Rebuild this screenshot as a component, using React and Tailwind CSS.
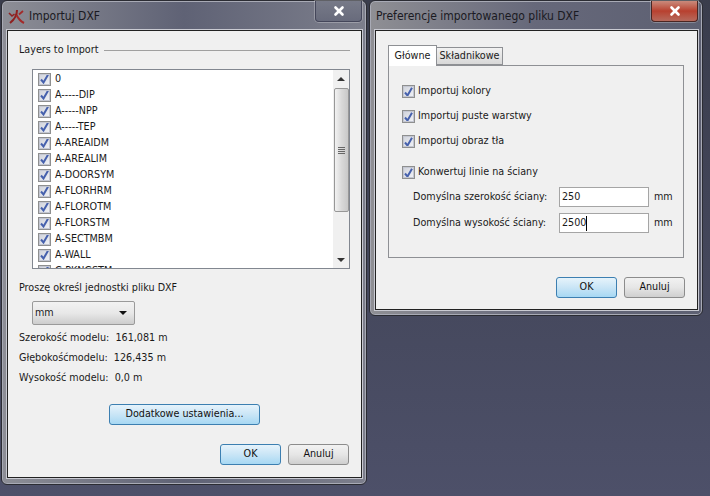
import React from "react";
import { X } from "lucide-react";

const layers = [
  "0",
  "A-----DIP",
  "A-----NPP",
  "A-----TEP",
  "A-AREAIDM",
  "A-AREALIM",
  "A-DOORSYM",
  "A-FLORHRM",
  "A-FLOROTM",
  "A-FLORSTM",
  "A-SECTMBM",
  "A-WALL",
  "C-PKNGSTM",
];

const CheckBox = ({ checked = true }) => (
  <span className="flex items-center justify-center w-[13px] h-[13px] shrink-0 border border-[#8e8f8f] bg-gradient-to-br from-[#cfd2da] to-[#f2f3f7] outline outline-1 -outline-offset-2 outline-[#c4c7d2]">
    {checked && (
      <svg width="9" height="10" viewBox="0 0 9 10">
        <path d="M1 5.5 L3.5 8.5 L8 0.8" stroke="#4661ad" strokeWidth="2" fill="none" />
      </svg>
    )}
  </span>
);

const Button = ({ children, primary, className }) => (
  <button
    className={
      "flex items-center justify-center h-[21px] rounded-[3px] border text-[#111] " +
      (primary
        ? "border-[#3c7fb1] bg-gradient-to-b from-[#e6f3fb] via-[#c9e5f6] to-[#a7d8f3] "
        : "border-[#8c8c8c] bg-gradient-to-b from-[#f2f2f2] via-[#e6e6e6] to-[#cfcfcf] ") +
      className
    }
  >
    {children}
  </button>
);

const CloseButton = ({ active }) => (
  <div
    className={
      "flex items-center justify-center w-[47px] h-[21px] rounded-b-[4px] border border-t-0 shadow-[0_0_0_1px_rgba(255,255,255,0.25)] " +
      (active
        ? "border-[#4a2522] bg-gradient-to-b from-[#c98a7c] via-[#b8402f] to-[#b5695c]"
        : "border-[#44465a] bg-gradient-to-b from-[#777a88] to-[#686b7c]")
    }
  >
    <X size={14} strokeWidth={4.5} className="text-white" />
  </div>
);

const Logo = () => (
  <svg width="17" height="15" viewBox="0 0 17 15" className="shrink-0">
    <path d="M1 4 L4 7 L6.5 5" stroke="#8f2020" strokeWidth="1.6" fill="none" />
    <path d="M9 1 C9 6 7 10 2 14" stroke="#8f2020" strokeWidth="2" fill="none" />
    <path d="M8.5 6 C10 9 12 12 16 14" stroke="#a32a2a" strokeWidth="2" fill="none" />
    <path d="M15 2 L11 5.5" stroke="#a32a2a" strokeWidth="1.8" fill="none" />
  </svg>
);

const LayersWindow = () => (
  <div className="flex flex-col w-[366px] h-[485px] pl-[5px] pr-[4px] pb-[6px] rounded-[6px] border border-[#2b2c33] shadow-[inset_0_0_0_1px_#a8aab5] bg-gradient-to-r from-[#8d8e96] via-[#5f6275] to-[#7d7f8c]">
    <div className="flex items-start justify-between h-[29px] shrink-0">
      <div className="flex items-center gap-[4px] h-[29px] pl-[1px] pt-[1px] text-[12px] text-[#1a1a22]">
        <Logo />
        <span>Importuj DXF</span>
      </div>
      <CloseButton />
    </div>
    <div className="flex flex-col flex-1 min-h-0 border border-[#222] shadow-[0_0_0_1px_#c9cad2] bg-[#f0f0f0] pl-[11px] pr-[11px]">
      <div className="flex items-center gap-[6px] h-[14px] mt-[12px] shrink-0">
        <span>Layers to Import</span>
        <div className="flex-1 h-px bg-[#a0a0a0]" />
      </div>
      <div className="flex ml-[13px] h-[200px] mt-[12px] shrink-0 border border-[#828790] bg-white">
        <div className="flex-1 overflow-hidden pt-px">
          {layers.map((name) => (
            <div key={name} className="flex items-center gap-[4px] h-[16px] pl-[5px]">
              <CheckBox />
              <span>{name}</span>
            </div>
          ))}
        </div>
        <div className="flex flex-col items-center w-[16px] bg-[#f0f0f0]">
          <div className="flex items-center justify-center h-[18px] shrink-0">
            <div className="w-0 h-0 border-x-[4px] border-x-transparent border-b-[4px] border-b-[#333]" />
          </div>
          <div className="flex items-center justify-center w-[15px] h-[124px] shrink-0 rounded-[2px] border border-[#979797] bg-gradient-to-r from-[#f2f2f2] via-[#d9d9d9] to-[#c8c8c8]">
            <div className="flex flex-col gap-px">
              <div className="w-[7px] h-px bg-[#666]" />
              <div className="w-[7px] h-px bg-[#666]" />
              <div className="w-[7px] h-px bg-[#666]" />
              <div className="w-[7px] h-px bg-[#666]" />
            </div>
          </div>
          <div className="flex flex-1 items-end justify-center pb-[6px]">
            <div className="w-0 h-0 border-x-[4px] border-x-transparent border-t-[4px] border-t-[#333]" />
          </div>
        </div>
      </div>
      <div className="h-[14px] mt-[12px] leading-[14px] shrink-0">Proszę określ jednostki pliku DXF</div>
      <div className="flex items-center justify-between ml-[13px] w-[103px] h-[24px] mt-[6px] shrink-0 pl-[2px] pr-[7px] rounded-[2px] border border-[#9a9a9a] bg-gradient-to-b from-[#f2f2f2] via-[#e8e8e8] to-[#cdcdcd]">
        <span>mm</span>
        <div className="w-0 h-0 border-x-[4px] border-x-transparent border-t-[4px] border-t-[#111]" />
      </div>
      <div className="flex flex-col gap-[6px] mt-[6px] shrink-0 leading-[14px]">
        <div className="whitespace-pre">Szerokość modelu:  161,081 m</div>
        <div className="whitespace-pre">Głębokośćmodelu:  126,435 m</div>
        <div className="whitespace-pre">Wysokość modelu:  0,0 m</div>
      </div>
      <Button primary className="w-[151px] mt-[19px] ml-[90px] shrink-0">Dodatkowe ustawienia...</Button>
      <div className="flex justify-end gap-[7px] mt-[19px] mr-px shrink-0">
        <Button primary className="w-[61px]">OK</Button>
        <Button className="w-[61px]">Anuluj</Button>
      </div>
    </div>
  </div>
);

const Option = ({ label, checked, className }) => (
  <div className={"flex items-center gap-[3px] h-[15px] " + className}>
    <CheckBox checked={checked} />
    <span>{label}</span>
  </div>
);

const WallField = ({ label, value, caret, className }) => (
  <div className={"flex items-center h-[20px] " + className}>
    <span className="w-[146px]">{label}</span>
    <div className="flex items-center w-[90px] h-[20px] pl-[2px] border border-[#a5a5a5] bg-white">
      {value}
      {caret && <span className="w-px h-[15px] bg-black" />}
    </div>
    <span className="ml-[5px]">mm</span>
  </div>
);

const PrefsWindow = () => (
  <div className="flex flex-col w-[334px] h-[316px] pl-[5px] pr-[4px] pb-[5px] rounded-[6px] border border-[#2b2c33] shadow-[inset_0_0_0_1px_#a8aab5] bg-gradient-to-r from-[#8f8f94] via-[#66687a] to-[#5d6072]">
    <div className="flex items-start justify-between h-[29px] shrink-0">
      <div className="h-[29px] leading-[31px] pl-[1px] text-[12px] text-[#1a1a22]">Preferencje importowanego pliku DXF</div>
      <CloseButton active />
    </div>
    <div className="flex flex-col flex-1 min-h-0 border border-[#222] shadow-[0_0_0_1px_#c9cad2] bg-[#f0f0f0] pl-[12px] pr-[13px]">
      <div className="flex items-end h-[20px] mt-[14px] shrink-0 relative z-10">
        <div className="flex items-center justify-center w-[49px] h-[21px] -mb-px border border-b-0 border-[#8e9094] bg-white">Główne</div>
        <div className="flex items-center justify-center w-[66px] h-[18px] border border-l-0 border-[#8e9094] bg-gradient-to-b from-[#f2f2f2] to-[#d8d8d8]">Składnikowe</div>
      </div>
      <div className="flex flex-col h-[193px] shrink-0 border border-[#8e9094] pl-[13px]">
        <Option label="Importuj kolory" checked className="mt-[18px]" />
        <Option label="Importuj puste warstwy" className="mt-[10px]" />
        <Option label="Importuj obraz tła" checked className="mt-[10px]" />
        <Option label="Konwertuj linie na ściany" checked className="mt-[16px]" />
        <WallField label="Domyślna szerokość ściany:" value="250" className="mt-[7px] pl-[11px]" />
        <WallField label="Domyślna wysokość ściany:" value="2500" caret className="mt-[6px] pl-[11px]" />
      </div>
      <div className="flex justify-end gap-[7px] mt-[19px] -mr-px shrink-0">
        <Button primary className="w-[61px]">OK</Button>
        <Button className="w-[61px]">Anuluj</Button>
      </div>
    </div>
  </div>
);

export default function App() {
  return (
    <div className="flex items-start gap-[2px] w-[710px] h-[496px] pl-px overflow-hidden bg-gradient-to-b from-[#3a3d4c] to-[#4d5069] font-['DejaVu_Sans_Condensed','Noto_Sans',sans-serif] text-[10.7px] text-[#1a1a1a]">
      <LayersWindow />
      <PrefsWindow />
    </div>
  );
}
